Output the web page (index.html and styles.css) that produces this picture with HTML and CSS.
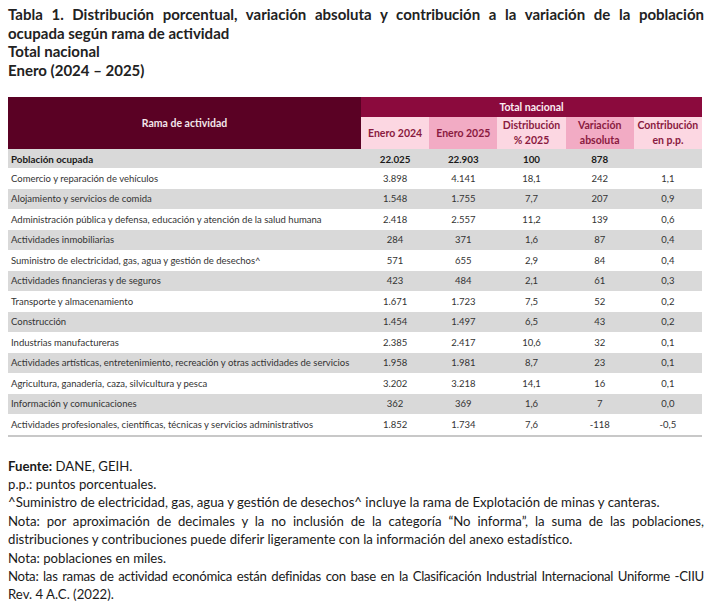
FILE: index.html
```html
<!DOCTYPE html>
<html lang="es">
<head>
<meta charset="utf-8">
<title>Tabla 1</title>
<link rel="stylesheet" href="styles.css">
</head>
<body>
<div class="page">
  <h1 class="title">
    <span class="just">Tabla 1. Distribución porcentual, variación absoluta y contribución a la variación de la población</span>
    <span class="line">ocupada según rama de actividad</span>
    <span class="line">Total nacional</span>
    <span class="line">Enero (2024 – 2025)</span>
  </h1>

  <table class="tbl">
    <colgroup>
      <col class="c-rama">
      <col class="c-num"><col class="c-num"><col class="c-num"><col class="c-num"><col class="c-num">
    </colgroup>
    <thead>
      <tr class="h1">
        <th rowspan="2" class="rama-h">Rama de actividad</th>
        <th colspan="5" class="tn">Total nacional</th>
      </tr>
      <tr class="h2">
        <th class="lt">Enero 2024</th>
        <th class="md">Enero 2025</th>
        <th class="lt">Distribución<br>% 2025</th>
        <th class="md">Variación<br>absoluta</th>
        <th class="lt">Contribución<br>en p.p.</th>
      </tr>
    </thead>
    <tbody>
      <tr class="g tot"><td>Población ocupada</td><td>22.025</td><td>22.903</td><td>100</td><td>878</td><td></td></tr>
      <tr><td>Comercio y reparación de vehículos</td><td>3.898</td><td>4.141</td><td>18,1</td><td>242</td><td>1,1</td></tr>
      <tr class="g"><td>Alojamiento y servicios de comida</td><td>1.548</td><td>1.755</td><td>7,7</td><td>207</td><td>0,9</td></tr>
      <tr><td>Administración pública y defensa, educación y atención de la salud humana</td><td>2.418</td><td>2.557</td><td>11,2</td><td>139</td><td>0,6</td></tr>
      <tr class="g"><td>Actividades inmobiliarias</td><td>284</td><td>371</td><td>1,6</td><td>87</td><td>0,4</td></tr>
      <tr><td>Suministro de electricidad, gas, agua y gestión de desechos^</td><td>571</td><td>655</td><td>2,9</td><td>84</td><td>0,4</td></tr>
      <tr class="g"><td>Actividades financieras y de seguros</td><td>423</td><td>484</td><td>2,1</td><td>61</td><td>0,3</td></tr>
      <tr><td>Transporte y almacenamiento</td><td>1.671</td><td>1.723</td><td>7,5</td><td>52</td><td>0,2</td></tr>
      <tr class="g"><td>Construcción</td><td>1.454</td><td>1.497</td><td>6,5</td><td>43</td><td>0,2</td></tr>
      <tr><td>Industrias manufactureras</td><td>2.385</td><td>2.417</td><td>10,6</td><td>32</td><td>0,1</td></tr>
      <tr class="g"><td>Actividades artísticas, entretenimiento, recreación y otras actividades de servicios</td><td>1.958</td><td>1.981</td><td>8,7</td><td>23</td><td>0,1</td></tr>
      <tr><td>Agricultura, ganadería, caza, silvicultura y pesca</td><td>3.202</td><td>3.218</td><td>14,1</td><td>16</td><td>0,1</td></tr>
      <tr class="g"><td>Información y comunicaciones</td><td>362</td><td>369</td><td>1,6</td><td>7</td><td>0,0</td></tr>
      <tr class="last"><td>Actividades profesionales, científicas, técnicas y servicios administrativos</td><td>1.852</td><td>1.734</td><td>7,6</td><td>-118</td><td>-0,5</td></tr>
    </tbody>
  </table>

  <div class="notes">
    <p><b>Fuente:</b> DANE, GEIH.</p>
    <p>p.p.: puntos porcentuales.</p>
    <p>^Suministro de electricidad, gas, agua y gestión de desechos^ incluye la rama de Explotación de minas y canteras.</p>
    <p class="j">Nota: por aproximación de decimales y la no inclusión de la categoría “No informa”, la suma de las poblaciones, distribuciones y contribuciones puede diferir ligeramente con la información del anexo estadístico.</p>
    <p>Nota: poblaciones en miles.</p>
    <p><span class="jline">Nota: las ramas de actividad económica están definidas con base en la Clasificación Industrial Internacional Uniforme -CIIU</span>Rev. 4 A.C. (2022).</p>
  </div>
</div>
</body>
</html>
```

FILE: styles.css
```css
html, body {
  margin: 0;
  padding: 0;
  background: #ffffff;
}

.page {
  width: 696px;
  padding: 5px 0 0 8px;
  font-family: Lato, "Open Sans", sans-serif;
  color: #1a1a1a;
}

.title {
  margin: 0;
  font-size: 15px;
  line-height: 18.5px;
  font-weight: 700;
  color: #222;
}

.title .just {
  display: block;
  text-align: justify;
  text-align-last: justify;
  white-space: nowrap;
  word-spacing: -0.4px;
}

.title .line {
  display: block;
}

.tbl {
  margin-top: 18px;
  width: 694px;
  border-collapse: collapse;
  table-layout: fixed;
  font-size: 9.5px;
  color: #333;
}

.c-rama { width: 353px; }
.c-num { width: 68.2px; }

.tbl th {
  font-weight: 700;
  padding: 0;
  text-align: center;
}

.rama-h {
  background: #5a0124;
  color: #f3e6ea;
  font-size: 10.5px;
}

.tn {
  background: #8b0a3d;
  color: #fbeef2;
  height: 20px;
  font-size: 10.5px;
}

.h2 th {
  height: 32px;
  line-height: 15px;
  color: #8a1a40;
  font-size: 10.5px;
}

.h2 .lt { background: #fcd7e2; }
.h2 .md { background: #f2abc4; }

.tbl td {
  height: 20.5px;
  padding: 0;
  text-align: center;
  white-space: nowrap;
}

.tbl td:first-child {
  text-align: left;
  padding-left: 3px;
}

.tbl tr.g td { background: #d9d9d9; }

.tbl tr.tot td {
  font-weight: 700;
  color: #1a1a1a;
  height: 19px;
  font-size: 9.8px;
}

.tbl tr.last td { border-bottom: 2px solid #c8c8c8; }

.notes {
  margin-top: 20px;
  font-size: 13.2px;
  line-height: 18.4px;
  color: #1a1a1a;
}

.notes p {
  margin: 0;
}

.notes .j {
  text-align: justify;
}

.notes .jline {
  display: block;
  white-space: nowrap;
  text-align: justify;
  text-align-last: justify;
  letter-spacing: -0.28px;
}
```
